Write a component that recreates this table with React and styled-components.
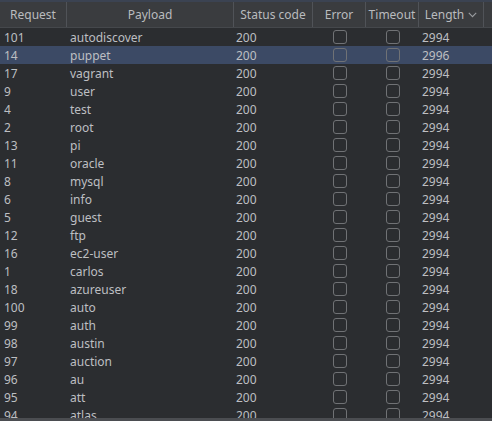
import React from "react";
import styled, { createGlobalStyle } from "styled-components";

const Global = createGlobalStyle`
  html, body { margin: 0; padding: 0; background: #2b2d30; }
  body { font-family: "Noto Sans", "Open Sans", sans-serif; }
`;

const COLS = "67px 167px 79px 53px 53px 65px 1fr";

const Frame = styled.div`
  width: 492px;
  height: 421px;
  display: flex;
  flex-direction: column;
  background: #2b2d30;
  overflow: hidden;
  border-top: 2px solid #3b4352;
  box-sizing: border-box;
`;

const Viewport = styled.div`
  flex: 1;
  overflow: hidden;
`;

const HeaderRow = styled.div`
  display: grid;
  grid-template-columns: ${COLS};
  height: 25px;
  background: #3a3c3f;
  border-bottom: 1px solid #45484c;
  box-sizing: content-box;
`;

const HeadCell = styled.div`
  display: flex;
  align-items: center;
  justify-content: center;
  gap: 4px;
  font-size: 12px;
  color: #b9bbbe;
  border-right: ${(p) => (p.$last ? "none" : "1px solid #505358")};
  white-space: nowrap;
`;

const Row = styled.div`
  display: grid;
  grid-template-columns: ${COLS};
  height: 18px;
  background: ${(p) => (p.$selected ? "#3c4a65" : "transparent")};
  font-size: 12px;
  color: #bdbfc2;
`;

const Cell = styled.div`
  display: flex;
  align-items: center;
  padding-left: ${(p) => p.$pad ?? 4}px;
  justify-content: ${(p) => (p.$center ? "center" : "flex-start")};
  padding-left: ${(p) => (p.$center ? 0 : (p.$pad ?? 4))}px;
  white-space: nowrap;
  overflow: hidden;
`;

const Box = styled.span`
  width: 12px;
  height: 12px;
  border: 1px solid #707275;
  border-radius: 3px;
  display: block;
`;

const Footer = styled.div`
  height: 3px;
  background: #4b4d51;
`;

const Chevron = () => (
  <svg width="9" height="6" viewBox="0 0 9 6" fill="none">
    <path d="M0.8 0.8 L4.5 4.6 L8.2 0.8" stroke="#9a9ca0" strokeWidth="1.1" />
  </svg>
);

const rows = [
  ["101", "autodiscover", "2994"],
  ["14", "puppet", "2996"],
  ["17", "vagrant", "2994"],
  ["9", "user", "2994"],
  ["4", "test", "2994"],
  ["2", "root", "2994"],
  ["13", "pi", "2994"],
  ["11", "oracle", "2994"],
  ["8", "mysql", "2994"],
  ["6", "info", "2994"],
  ["5", "guest", "2994"],
  ["12", "ftp", "2994"],
  ["16", "ec2-user", "2994"],
  ["1", "carlos", "2994"],
  ["18", "azureuser", "2994"],
  ["100", "auto", "2994"],
  ["99", "auth", "2994"],
  ["98", "austin", "2994"],
  ["97", "auction", "2994"],
  ["96", "au", "2994"],
  ["95", "att", "2994"],
  ["94", "atlas", "2994"],
];

export default function App() {
  return (
    <>
      <Global />
      <Frame>
        <HeaderRow>
          <HeadCell>Request</HeadCell>
          <HeadCell>Payload</HeadCell>
          <HeadCell>Status code</HeadCell>
          <HeadCell>Error</HeadCell>
          <HeadCell>Timeout</HeadCell>
          <HeadCell>
            Length <Chevron />
          </HeadCell>
          <HeadCell $last />
        </HeaderRow>
        <Viewport>
          {rows.map(([req, payload, len]) => (
            <Row key={req} $selected={req === "14"}>
              <Cell>{req}</Cell>
              <Cell $pad={3}>{payload}</Cell>
              <Cell $pad={2}>200</Cell>
              <Cell $center>
                <Box />
              </Cell>
              <Cell $center>
                <Box />
              </Cell>
              <Cell $pad={3}>{len}</Cell>
              <Cell />
            </Row>
          ))}
        </Viewport>
        <Footer />
      </Frame>
    </>
  );
}
